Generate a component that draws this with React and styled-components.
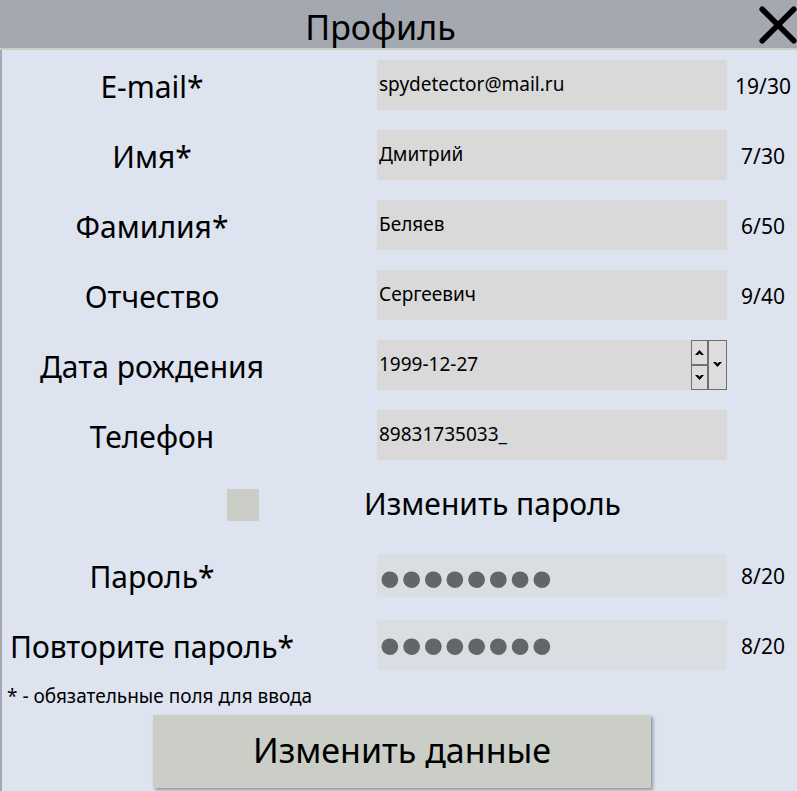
import React, { useState } from "react";
import styled, { createGlobalStyle } from "styled-components";

const GlobalStyle = createGlobalStyle`
  *, *::before, *::after { box-sizing: border-box; }
  body {
    margin: 0;
    background: #dde4f0;
    color: #000;
    font-family: "Noto Sans", "Open Sans", sans-serif;
  }
  button, input { font: inherit; color: inherit; }
`;

const Window = styled.main`
  min-height: 100vh;
  border-left: 2px solid #a3a8b1;
  background: #dde4f0;
`;

const Header = styled.header`
  display: grid;
  grid-template-columns: 40px 1fr 40px;
  align-items: center;
  height: 50px;
  margin-left: -2px;
  background: #a3a8b1;
  border-bottom: 2px solid #cacec6;
`;

const Title = styled.h1`
  grid-column: 2;
  margin: 0;
  padding: 6px 36px 0 0;
  font-size: 34px;
  line-height: 42px;
  font-weight: 400;
  text-align: center;
`;

const CloseButton = styled.button`
  display: flex;
  padding: 2px 0 0;
  border: 0;
  background: none;
  cursor: pointer;
`;

const Row = styled.div`
  display: grid;
  grid-template-columns: minmax(0, 300fr) minmax(0, 75fr) minmax(0, 350fr) minmax(0, 70fr);
  align-items: center;
  height: 70px;
`;

const Label = styled.label`
  padding-bottom: 2px;
  font-size: 30px;
  line-height: 40px;
  text-align: center;
  white-space: nowrap;

  ${Row} & { padding: 4px 0 0; }
`;

const Field = styled.div`
  grid-column: 3;
  display: flex;
  height: ${(p) => (p.$short ? "43px" : "50px")};
  background: ${(p) => (p.$muted ? "#dadde2" : "#d9d9d9")};
`;

const TextInput = styled.input`
  flex: 1;
  min-width: 0;
  height: 100%;
  padding: 0 2px 2px;
  border: 0;
  outline: 0;
  background: none;
  font-size: 19px;
`;

const SecretInput = styled(TextInput)`
  padding: ${(p) => (p.$low ? "6px" : "0")} 0 0 2px;
  color: #63656b;
  font-family: "Liberation Sans", sans-serif;
  font-size: 62px;
`;

const Counter = styled.output`
  padding: 2px 0 0 2px;
  font-size: 21px;
  line-height: 28px;
  text-align: center;
`;

const Stepper = styled.div`
  display: grid;
  grid-template-columns: 17px 19px;
  grid-template-rows: 1fr 1fr;
  background: #ddd;
`;

const StepButton = styled.button`
  display: flex;
  align-items: center;
  justify-content: center;
  grid-row: ${(p) => (p.$tall ? "1 / 3" : "auto")};
  grid-column: ${(p) => (p.$tall ? 2 : 1)};
  padding: 0;
  border: 1px solid #707070;
  background: #ddd;
`;

const ToggleRow = styled.div`
  display: flex;
  align-items: center;
  gap: 105px;
  height: 70px;
  padding-left: 225px;
`;

const Toggle = styled.input`
  appearance: none;
  flex: none;
  width: 32px;
  height: 32px;
  margin: 0;
  background: #cacec6;

  &:checked { background: #63656b; }
`;

const Footer = styled.footer`
  padding: 4px 0 2px 5px;
`;

const Note = styled.p`
  margin: 0 0 7px;
  font-size: 19px;
  line-height: 24px;
`;

const SubmitButton = styled.button`
  display: block;
  width: 63%;
  height: 73px;
  margin: 0 auto;
  padding: 0 0 4px;
  border: 0;
  background: #cacec6;
  box-shadow: 2px 2px 3px #9095a3;
  font-size: 34px;
`;

function CloseIcon() {
  return (
    <svg width="40" height="40" viewBox="0 0 40 40" aria-hidden="true">
      <path d="M5.2 4.2 36.8 35.8M36.8 4.2 5.2 35.8" stroke="#000" strokeWidth="5.6" strokeLinecap="round" />
    </svg>
  );
}

function Chevron({ up }) {
  return (
    <svg width="9" height="6" viewBox="0 0 9 6" aria-hidden="true">
      <path d={up ? "M4.5 0 9 5H6L4.5 3.3 3 5H0Z" : "M4.5 5 9 0H6L4.5 1.7 3 0H0Z"} />
    </svg>
  );
}

const personal = [
  { id: "email", label: "E-mail*", value: "spydetector@mail.ru", count: "19/30" },
  { id: "name", label: "Имя*", value: "Дмитрий", count: "7/30" },
  { id: "surname", label: "Фамилия*", value: "Беляев", count: "6/50" },
  { id: "patronymic", label: "Отчество", value: "Сергеевич", count: "9/40" },
  { id: "birth", label: "Дата рождения", value: "1999-12-27", stepper: true },
  { id: "phone", label: "Телефон", value: "89831735033_" },
];

const secrets = [
  { id: "password", label: "Пароль*", value: "password", count: "8/20", short: true },
  { id: "repeat", label: "Повторите пароль*", value: "password", count: "8/20" },
];

function FormRow({ id, label, value, count, stepper, short, secret }) {
  return (
    <Row>
      <Label htmlFor={id}>{label}</Label>
      <Field $short={short} $muted={secret}>
        {secret ? (
          <SecretInput id={id} type="password" defaultValue={value} $low={short} />
        ) : (
          <TextInput id={id} type="text" defaultValue={value} />
        )}
        {stepper && (
          <Stepper>
            <StepButton type="button" aria-label="Увеличить"><Chevron up /></StepButton>
            <StepButton type="button" aria-label="Уменьшить"><Chevron /></StepButton>
            <StepButton type="button" aria-label="Календарь" $tall><Chevron /></StepButton>
          </Stepper>
        )}
      </Field>
      {count && <Counter htmlFor={id}>{count}</Counter>}
    </Row>
  );
}

export default function App() {
  const [change, setChange] = useState(false);
  return (
    <Window>
      <GlobalStyle />
      <Header>
        <Title>Профиль</Title>
        <CloseButton type="button" aria-label="Закрыть"><CloseIcon /></CloseButton>
      </Header>
      <form onSubmit={(e) => e.preventDefault()}>
        {personal.map((f) => <FormRow key={f.id} {...f} />)}
        <ToggleRow>
          <Toggle id="change" type="checkbox" checked={change} onChange={(e) => setChange(e.target.checked)} />
          <Label htmlFor="change">Изменить пароль</Label>
        </ToggleRow>
        {secrets.map((f) => <FormRow key={f.id} {...f} secret />)}
        <Footer>
          <Note>* - обязательные поля для ввода</Note>
          <SubmitButton type="submit">Изменить данные</SubmitButton>
        </Footer>
      </form>
    </Window>
  );
}
